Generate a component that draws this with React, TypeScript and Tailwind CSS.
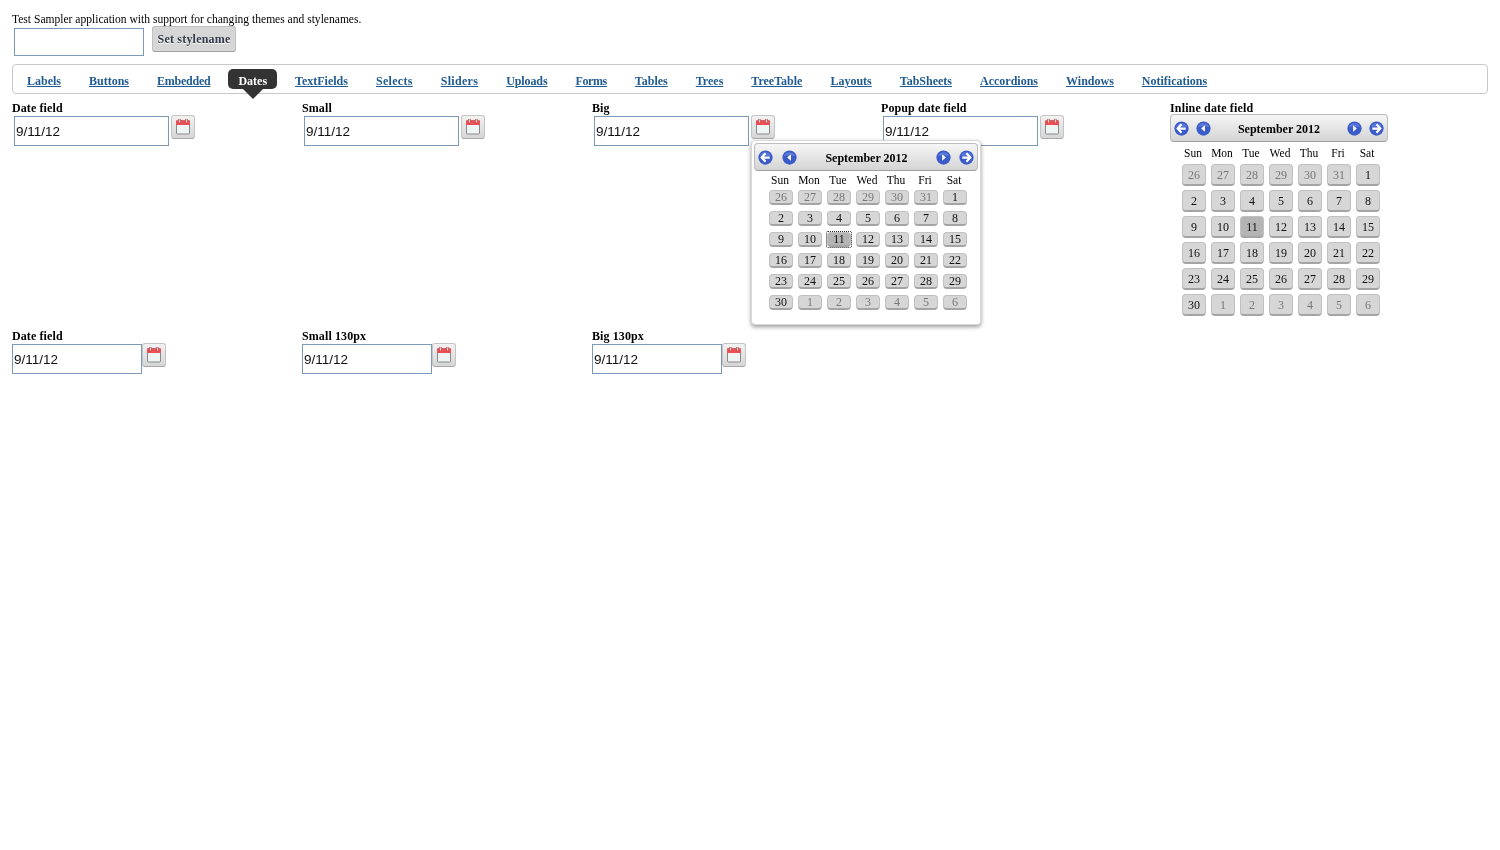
import React from "react";

const navItems: [string, string][] = [["Labels",""],["Buttons",""],["Embedded","tracking-[-0.25px]"],["Dates",""],["TextFields",""],["Selects","tracking-[0.3px]"],["Sliders","tracking-[0.3px]"],["Uploads","tracking-[-0.1px]"],["Forms","tracking-[-0.4px]"],["Tables",""],["Trees",""],["TreeTable",""],["Layouts",""],["TabSheets",""],["Accordions",""],["Windows",""],["Notifications",""]];
const days = ["Sun","Mon","Tue","Wed","Thu","Fri","Sat"];
const cells: [number, boolean][] = [
  ...[26,27,28,29,30,31].map((d): [number, boolean] => [d, true]),
  ...Array.from({ length: 30 }, (_, i): [number, boolean] => [i + 1, false]),
  ...[1,2,3,4,5,6].map((d): [number, boolean] => [d, true]),
];

function CalendarIcon() {
  return (
    <svg width="16" height="16" viewBox="0 0 16 16">
      <rect x="1.5" y="1.5" width="13" height="13.5" rx="1" fill="#eef4f4" stroke="#8a8a8a" />
      <rect x="1" y="1.5" width="14" height="4.5" fill="#ee4f55" />
      <rect x="3.5" y="0" width="2" height="4" fill="#f3c4c4" stroke="#a33" strokeWidth="0.5" />
      <rect x="10.5" y="0" width="2" height="4" fill="#f3c4c4" stroke="#a33" strokeWidth="0.5" />
    </svg>
  );
}

function Field({ label, width, inset, value = "9/11/12" }: { label: string; width: string; inset?: boolean; value?: string }) {
  return (
    <div>
      <div className="text-[12px] leading-[14px] font-bold h-[15px] tracking-[0.1px]">{label}</div>
      <div className={`flex items-start ${inset ? "pl-[2px]" : ""}`}>
        <div className={`${width} h-[30px] border border-[#7c9ab8] bg-white pl-px text-[13.5px] leading-[30px] text-[#111] font-['Liberation_Sans',sans-serif]`}>{value}</div>
        <button className={`${inset ? "ml-[2px]" : ""} w-[24px] h-[24px] -mt-[1px] rounded-[3px] border border-[#c4c4c4] border-b-[#a8a8a8] bg-gradient-to-b from-[#f2f2f2] to-[#d6d6d6] flex items-center justify-center`}>
          <CalendarIcon />
        </button>
      </div>
    </div>
  );
}

function Arrow({ kind }: { kind: "double-left" | "left" | "right" | "double-right" }) {
  const paths: Record<string, React.ReactNode> = {
    "double-left": <path d="M8 3.5 L4 8 L8 12.5 M4.5 8 H12.5" stroke="#fff" strokeWidth="2.4" fill="none" />,
    "double-right": <path d="M8 3.5 L12 8 L8 12.5 M11.5 8 H3.5" stroke="#fff" strokeWidth="2.4" fill="none" />,
    left: <path d="M9.5 4.5 L5.5 8 L9.5 11.5 Z" fill="#fff" />,
    right: <path d="M6.5 4.5 L10.5 8 L6.5 11.5 Z" fill="#fff" />,
  };
  return (
    <svg width="15" height="15" viewBox="0 0 16 16" className="shrink-0">
      <circle cx="8" cy="8" r="7.6" fill="#3b5cc8" />
      <path d="M2 6 A6.5 6 0 0 1 14 6 Z" fill="#6f8ae0" opacity="0.6" />
      {paths[kind]}
    </svg>
  );
}

function Calendar({ popup }: { popup?: boolean }) {
  return (
    <div className={popup ? "w-[224px]" : "w-[218px]"}>
      <div className="h-[28px] rounded-[4px] border border-[#bdbdbd] border-b-[#a0a0a0] bg-gradient-to-b from-[#f6f6f6] to-[#d4d4d4] flex items-center px-[3px]">
        <Arrow kind="double-left" />
        <span className={popup ? "ml-[9px]" : "ml-[7px]"}><Arrow kind="left" /></span>
        <span className="flex-1 text-center text-[12px] font-bold pt-[1px]">September 2012</span>
        <span className={popup ? "mr-[8px]" : "mr-[7px]"}><Arrow kind="right" /></span>
        <Arrow kind="double-right" />
      </div>
      <div className={`grid grid-cols-[repeat(7,24px)] gap-x-[5px] ${popup ? "pl-[15px] mt-[2px] gap-y-[6px]" : "pl-[12px] mt-[4px] gap-y-[4px]"}`}>
        {days.map((d) => (
          <div key={d} className={`text-center text-[11.5px] leading-[14px] pr-[2px] ${popup ? "-mb-[3px]" : "mb-0"}`}>{d}</div>
        ))}
        {cells.map(([d, off], i) => {
          const selected = d === 11 && !off;
          return (
            <div key={i} className={popup && selected ? "outline-1 outline-dotted outline-[#222] rounded-[1px]" : ""}>
              <div
                className={`${popup ? "h-[15px] leading-[13px]" : "h-[22px] leading-[20px]"} rounded-[4px] border border-[#c0c0c0] border-b-2 border-b-[#a4a4a4] text-center text-[12px] ${selected ? "bg-[#b4b4b4] border-[#7c7c7c] border-b-[#7c7c7c] text-[#111]" : "bg-[#d6d6d6]"} ${off ? "text-[#777]" : "text-[#111]"}`}
              >
                {d}
              </div>
            </div>
          );
        })}
      </div>
    </div>
  );
}

export default function App() {
  return (
    <div className="min-h-[850px] text-black px-[12px] pt-[13px] font-['Liberation_Serif',serif] relative will-change-transform">
      <div className="text-[11.55px] leading-[13px] h-[13px]">Test Sampler application with support for changing themes and stylenames.</div>
      <div className="flex items-start h-[38px]">
        <div className="ml-[2px] mt-[2px] w-[130px] h-[28px] border border-[#7c9ab8] bg-white" />
        <button className="ml-[8px] w-[84px] h-[26px] rounded-[3px] border border-[#c0c0c0] border-b-[#a0a0a0] bg-[#d6d6d6] text-[12px] font-bold tracking-[0.2px] text-[#33394a] [text-shadow:0_1px_0_#fff]">Set stylename</button>
      </div>
      <nav className="h-[30px] w-[1476px] rounded-[4px] border border-[#c8c8c8] flex items-start pl-[9px] gap-x-[18px]">
        {navItems.map(([n, extra]) => {
          const active = n === "Dates";
          return active ? (
            <span key={n} className="relative mt-[4px] -mx-[5px] h-[20px] px-[10px] rounded-[5px] bg-[#333] text-white text-[12px] leading-[24px] font-bold">
              {n}
              <span className="absolute left-1/2 -translate-x-1/2 top-[20px] w-0 h-0 border-x-[10px] border-x-transparent border-t-[10px] border-t-[#333]" />
            </span>
          ) : (
            <a key={n} className={`px-[5px] mt-[4px] text-[12px] leading-[24px] font-bold underline text-[#1f5a92] ${extra}`}>{n}</a>
          );
        })}
      </nav>
      <div className="w-[1476px] grid grid-cols-[290px_290px_289px_289px_218px] grid-rows-[228px_auto] mt-[7px]">
        <Field label="Date field" width="w-[155px]" inset />
        <Field label="Small" width="w-[155px]" inset />
        <Field label="Big" width="w-[155px]" inset />
        <div className="relative">
          <Field label="Popup date field" width="w-[155px]" inset />
          <div className="absolute left-[-130px] top-[39px] w-[230px] h-[185px] bg-white rounded-[4px] border border-[#d8d8d8] shadow-[0_2px_4px_rgba(0,0,0,0.4)] p-[2px]">
            <Calendar popup />
          </div>
        </div>
        <div>
          <div className="text-[12px] leading-[14px] font-bold h-[13px] tracking-[0.15px]">Inline date field</div>
          <Calendar />
        </div>
        <Field label="Date field" width="w-[130px]" />
        <Field label="Small 130px" width="w-[130px]" />
        <Field label="Big 130px" width="w-[130px]" />
      </div>
    </div>
  );
}
